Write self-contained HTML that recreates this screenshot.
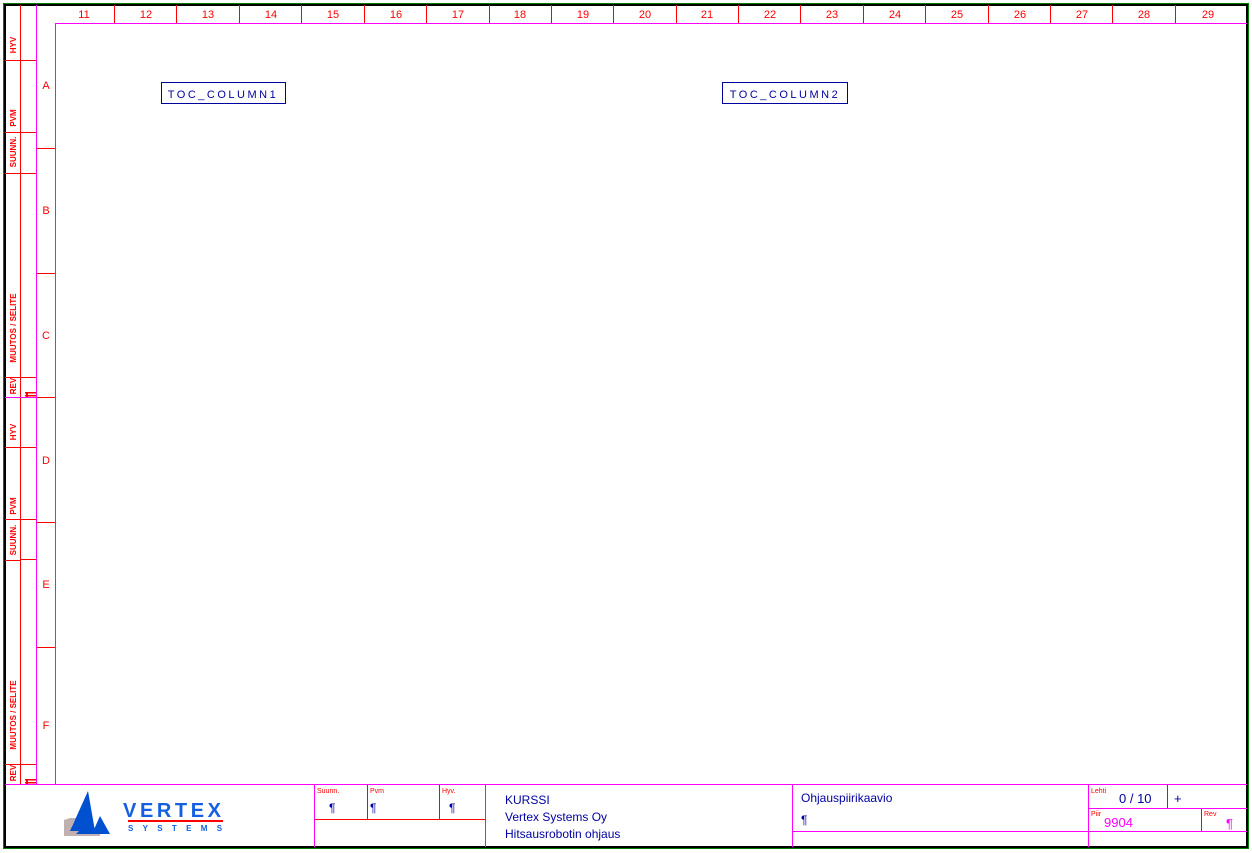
<!DOCTYPE html>
<html><head><meta charset="utf-8"><style>
html,body{margin:0;padding:0;background:#fff;}
svg{display:block;}
text{font-family:"Liberation Sans",sans-serif;}
</style></head><body>
<svg width="1252" height="853" viewBox="0 0 1252 853" xmlns="http://www.w3.org/2000/svg">
<rect x="0" y="0" width="1252" height="853" fill="#fff"/>
<rect x="3.5" y="3.5" width="1245" height="845" fill="none" stroke="#008000" stroke-width="1"/>
<rect x="5" y="5" width="1242" height="842" fill="none" stroke="#000" stroke-width="2"/>
<g stroke="#ff0000" stroke-width="1" shape-rendering="crispEdges">
<line x1="20.5" y1="5" x2="20.5" y2="784"/>
<line x1="114.5" y1="5" x2="114.5" y2="23"/>
<line x1="176.5" y1="5" x2="176.5" y2="23"/>
<line x1="239.5" y1="5" x2="239.5" y2="23"/>
<line x1="301.5" y1="5" x2="301.5" y2="23"/>
<line x1="364.5" y1="5" x2="364.5" y2="23"/>
<line x1="426.5" y1="5" x2="426.5" y2="23"/>
<line x1="489.5" y1="5" x2="489.5" y2="23"/>
<line x1="551.5" y1="5" x2="551.5" y2="23"/>
<line x1="613.5" y1="5" x2="613.5" y2="23"/>
<line x1="676.5" y1="5" x2="676.5" y2="23"/>
<line x1="738.5" y1="5" x2="738.5" y2="23"/>
<line x1="800.5" y1="5" x2="800.5" y2="23"/>
<line x1="863.5" y1="5" x2="863.5" y2="23"/>
<line x1="925.5" y1="5" x2="925.5" y2="23"/>
<line x1="988.5" y1="5" x2="988.5" y2="23"/>
<line x1="1050.5" y1="5" x2="1050.5" y2="23"/>
<line x1="1112.5" y1="5" x2="1112.5" y2="23"/>
<line x1="1175.5" y1="5" x2="1175.5" y2="23"/>
<line x1="36" y1="148.5" x2="55" y2="148.5"/>
<line x1="36" y1="273.5" x2="55" y2="273.5"/>
<line x1="36" y1="397.5" x2="55" y2="397.5"/>
<line x1="36" y1="522.5" x2="55" y2="522.5"/>
<line x1="36" y1="647.5" x2="55" y2="647.5"/>
<line x1="5" y1="60.5" x2="36" y2="60.5"/>
<line x1="5" y1="132.5" x2="36" y2="132.5"/>
<line x1="5" y1="173.5" x2="36" y2="173.5"/>
<line x1="5" y1="377.5" x2="36" y2="377.5"/>
<line x1="5" y1="447.5" x2="36" y2="447.5"/>
<line x1="5" y1="519.5" x2="36" y2="519.5"/>
<line x1="5" y1="560.5" x2="20" y2="560.5"/>
<line x1="20" y1="559.5" x2="36" y2="559.5"/>
<line x1="5" y1="764.5" x2="36" y2="764.5"/>
<line x1="367.5" y1="784" x2="367.5" y2="819"/>
<line x1="439.5" y1="784" x2="439.5" y2="819"/>
<line x1="314" y1="819.5" x2="485" y2="819.5"/>
<line x1="1167.5" y1="784" x2="1167.5" y2="808"/>
<line x1="1201.5" y1="808" x2="1201.5" y2="831"/>
</g>
<g fill="#ff0000">
<rect x="25" y="392" width="12" height="1.5"/><rect x="25" y="395" width="12" height="1.5"/><rect x="26" y="392" width="2" height="5"/>
<rect x="25" y="779" width="12" height="1.5"/><rect x="25" y="782" width="12" height="1.5"/><rect x="26" y="779" width="2" height="5"/>
</g>
<g stroke="#ff00ff" stroke-width="1" shape-rendering="crispEdges">
<line x1="36.5" y1="5" x2="36.5" y2="784"/>
<line x1="55.5" y1="23" x2="55.5" y2="784"/>
<line x1="55" y1="23.5" x2="1247" y2="23.5"/>
<line x1="5" y1="397.5" x2="36" y2="397.5"/>
<line x1="5" y1="784.5" x2="1247" y2="784.5"/>
<line x1="314.5" y1="784" x2="314.5" y2="847"/>
<line x1="485.5" y1="784" x2="485.5" y2="847"/>
<line x1="792.5" y1="784" x2="792.5" y2="847"/>
<line x1="1088.5" y1="784" x2="1088.5" y2="847"/>
<line x1="792" y1="831.5" x2="1247" y2="831.5"/>
<line x1="1088" y1="808.5" x2="1247" y2="808.5"/>
</g>
<g fill="#ff0000" font-size="11" text-anchor="middle">
<text x="84" y="18">11</text><text x="146" y="18">12</text><text x="208" y="18">13</text><text x="271" y="18">14</text>
<text x="333" y="18">15</text><text x="396" y="18">16</text><text x="458" y="18">17</text><text x="520" y="18">18</text>
<text x="583" y="18">19</text><text x="645" y="18">20</text><text x="707" y="18">21</text><text x="770" y="18">22</text>
<text x="832" y="18">23</text><text x="895" y="18">24</text><text x="957" y="18">25</text><text x="1020" y="18">26</text>
<text x="1082" y="18">27</text><text x="1144" y="18">28</text><text x="1208" y="18">29</text>
<text x="46" y="89">A</text><text x="46" y="214">B</text><text x="46" y="339">C</text>
<text x="46" y="464">D</text><text x="46" y="588">E</text><text x="46" y="729">F</text>
</g>
<g fill="#ff0000" font-size="8" font-weight="bold" text-anchor="middle">
<text transform="translate(16,45) rotate(-90)">HYV</text>
<text transform="translate(16,118) rotate(-90)">PVM</text>
<text transform="translate(16,152) rotate(-90)">SUUNN.</text>
<text transform="translate(16,328) rotate(-90)">MUUTOS / SELITE</text>
<text transform="translate(16,386) rotate(-90)">REV</text>
<text transform="translate(16,432) rotate(-90)">HYV</text>
<text transform="translate(16,506) rotate(-90)">PVM</text>
<text transform="translate(16,540) rotate(-90)">SUUNN.</text>
<text transform="translate(16,715) rotate(-90)">MUUTOS / SELITE</text>
<text transform="translate(16,773) rotate(-90)">REV</text>
</g>
<rect x="161.5" y="82.5" width="124" height="21" fill="none" stroke="#0000a0"/>
<text x="223" y="98" fill="#0000a0" font-size="11" text-anchor="middle" letter-spacing="2.5">TOC_COLUMN1</text>
<rect x="722.5" y="82.5" width="125" height="21" fill="none" stroke="#0000a0"/>
<text x="785" y="98" fill="#0000a0" font-size="11" text-anchor="middle" letter-spacing="2.5">TOC_COLUMN2</text>
<!-- logo -->
<path d="M64 820 L70 818 L76 818 L72 826 L80 830 L100 830 L100 836 L64 836 Z" fill="#c0b0b0"/>
<polygon points="88,791 70,831 95,831" fill="#0050d0"/>
<polygon points="100,816 92,834 110,834" fill="#0050d0"/>
<polygon points="76,834 95,834 88,822" fill="#0050d0"/>
<text x="123" y="817" fill="#1560e0" font-size="20" font-weight="bold" letter-spacing="3.6">VERTEX</text>
<rect x="128" y="820" width="95" height="2" fill="#ff0000"/>
<text x="128" y="831" fill="#1560e0" font-size="8" font-weight="bold" letter-spacing="9.3">SYSTEMS</text>
<g fill="#ff0000" font-size="7">
<text x="317" y="793">Suunn.</text><text x="370" y="793">Pvm</text><text x="442" y="793">Hyv.</text>
<text x="1091" y="793">Lehti</text><text x="1091" y="816">Piir</text><text x="1204" y="816">Rev</text>
</g>
<g fill="#0000a0" font-size="12">
<text x="329" y="812">¶</text><text x="370" y="812">¶</text><text x="449" y="812">¶</text>
<text x="505" y="804">KURSSI</text>
<text x="505" y="821">Vertex Systems Oy</text>
<text x="505" y="838">Hitsausrobotin ohjaus</text>
<text x="801" y="802">Ohjauspiirikaavio</text>
<text x="801" y="824">¶</text>
<text x="1119" y="803" font-size="13">0 / 10</text>
<text x="1174" y="803" font-size="13">+</text>
</g>
<text x="1104" y="827" fill="#ff00ff" font-size="13">9904</text>
<text x="1226" y="828" fill="#ff00ff" font-size="13">¶</text>
</svg>
</body></html>
